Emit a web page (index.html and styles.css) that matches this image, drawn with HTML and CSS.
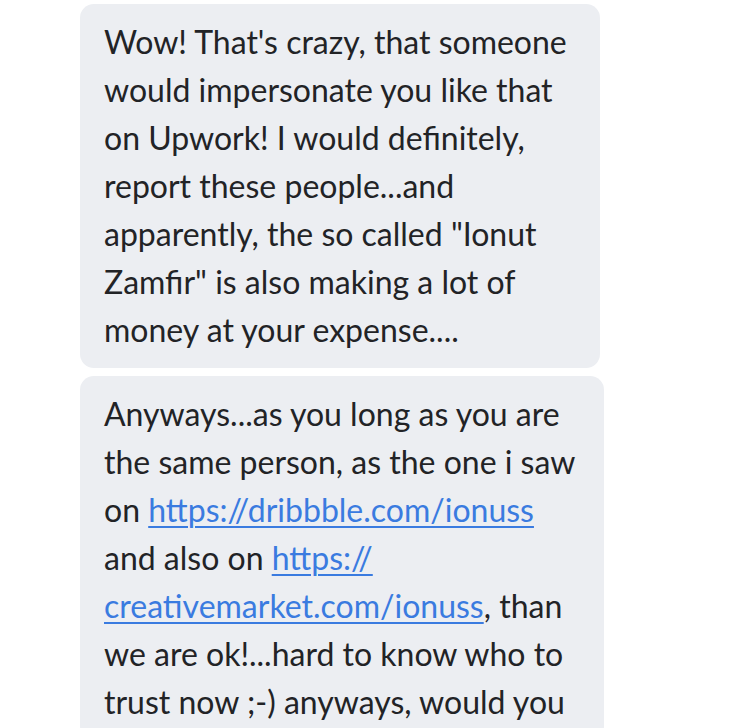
FILE: index.html
```html
<!DOCTYPE html>
<html>
<head>
<meta charset="utf-8">
<link rel="stylesheet" href="styles.css">
</head>
<body>
<div class="thread">
  <div class="bubble b1">
    <p class="msg">Wow! That's crazy, that someone<br>would impersonate you like that<br>on Upwork! I would definitely,<br>report these people...and<br>apparently, the so called "Ionut<br>Zamfir" is also making a lot of<br>money at your expense....</p>
  </div>
  <div class="bubble b2">
    <p class="msg">Anyways...as you long as you are<br>the same person, as the one i saw<br>on <a href="#">https://dribbble.com/ionuss</a><br>and also on <a href="#">https://<br>creativemarket.com/ionuss</a>, than<br>we are ok!...hard to know who to<br>trust now ;-) anyways, would you</p>
  </div>
</div>
</body>
</html>
```

FILE: styles.css
```css
html, body {
  margin: 0;
  padding: 0;
  background: #ffffff;
  overflow: hidden;
  height: 728px;
}
.thread {
  display: flex;
  flex-direction: column;
  align-items: flex-start;
  gap: 8px;
  padding: 4px 0 0 80px;
}
.bubble {
  background: #eceef2;
  border-radius: 14px;
  padding: 14px 24px 14px 24px;
  box-sizing: border-box;
}
.b1 { width: 520px; }
.b2 { width: 524px; }
.msg {
  margin: 0;
  font-family: "Lato", "Liberation Sans", sans-serif;
  font-size: 32px;
  line-height: 48px;
  color: #222326;
  white-space: nowrap;
}
.msg a {
  color: #3a7be0;
  text-decoration: underline;
  text-decoration-thickness: 1.5px;
  text-underline-offset: 4px;
}
```
